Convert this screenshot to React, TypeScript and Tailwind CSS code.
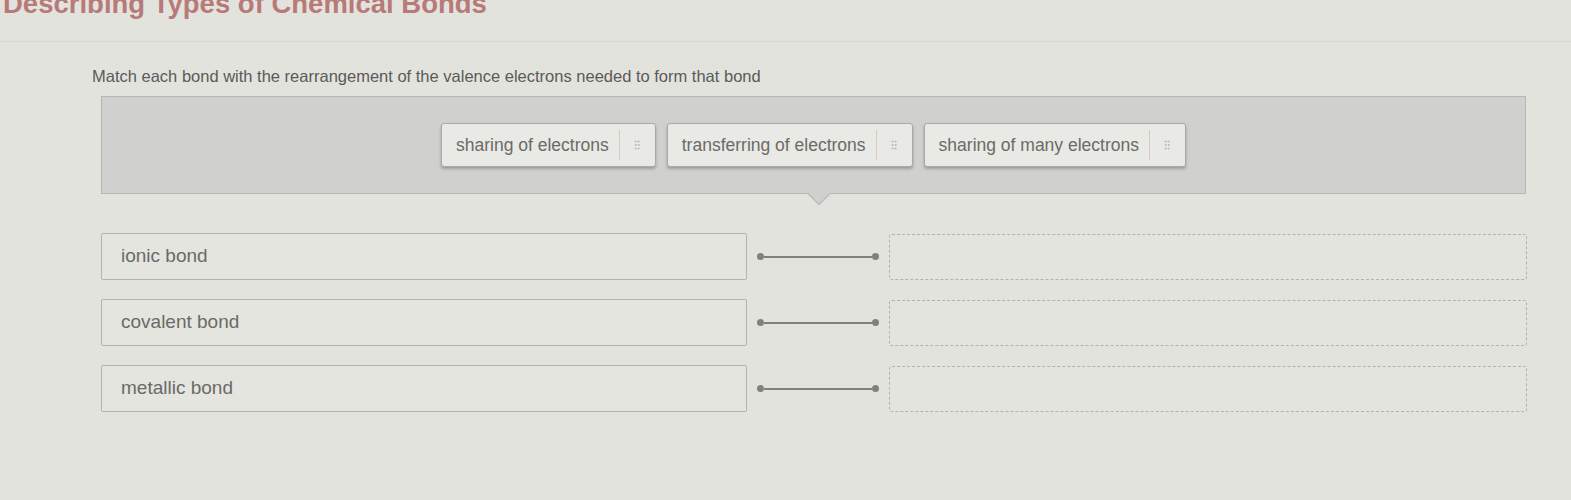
import { GripVertical } from 'lucide-react';

const choices = ['sharing of electrons', 'transferring of electrons', 'sharing of many electrons'];
const bonds = ['ionic bond', 'covalent bond', 'metallic bond'];

const Chip = ({ label }: { label: string }) => (
  <div className="flex items-center h-[44px] bg-[#e9e9e5] border border-[#a9a9a6] rounded-[3px] shadow-[0_2px_3px_rgba(0,0,0,0.25)] pl-[14px]">
    <span className="text-[17.5px] text-[#6b6b68] pr-[10px]">{label}</span>
    <div className="h-[30px] w-px bg-[#d8c8c4]" />
    <div className="w-[35px] flex justify-center">
      <GripVertical className="w-[12px] h-[14px] text-[#b9b3b0]" strokeWidth={2} />
    </div>
  </div>
);

const App = () => {
  return (
    <div className="w-[1571px] h-[500px] overflow-hidden bg-[#e3e3de] font-['Liberation_Sans',Arial,sans-serif]">
      <div className="h-[42px] border-b border-[#d8d8d3] overflow-hidden">
        <h1 className="mt-[-11px] ml-[3px] text-[27.5px] font-bold text-[#b87a78] leading-[30px]">
          Describing Types of Chemical Bonds
        </h1>
      </div>

      <div className="pl-[92px] pt-[24px] text-[16.5px] text-[#5a5a58] leading-[20px]">
        Match each bond with the rearrangement of the valence electrons needed to form that bond
      </div>

      <div className="relative mt-[10px] ml-[101px] w-[1425px] h-[98px] bg-[#d0d1cf] border border-[#b6b7b4] flex items-center justify-center gap-[11px]">
        {choices.map((c) => (
          <Chip key={c} label={c} />
        ))}
        <div className="absolute left-[709px] bottom-[-9px] w-[16px] h-[16px] rotate-45 bg-[#d0d1cf] border-r border-b border-[#b6b7b4]" />
      </div>

      <div className="mt-[39px] flex flex-col gap-[19px]">
        {bonds.map((b) => (
          <div key={b} className="flex items-center h-[47px]">
            <div className="ml-[101px] w-[646px] h-[47px] border border-[#b2b2ae] rounded-[2px] bg-[#e5e5e0] flex items-center pl-[19px] text-[19px] text-[#6a6a67]">
              {b}
            </div>
            <div className="ml-[10px] w-[122px] flex items-center">
              <div className="w-[7px] h-[7px] rounded-full bg-[#808080]" />
              <div className="flex-1 h-[2px] bg-[#808080]" />
              <div className="w-[7px] h-[7px] rounded-full bg-[#808080]" />
            </div>
            <div className="ml-[10px] w-[638px] h-[46px] border border-dashed border-[#b2b2ae] rounded-[3px] bg-[#e4e4df]" />
          </div>
        ))}
      </div>
    </div>
  );
};

export default App;
